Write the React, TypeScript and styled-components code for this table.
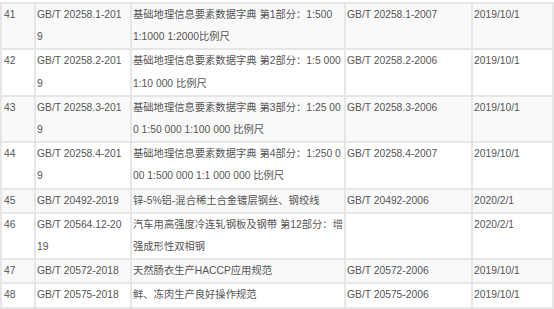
import React from "react";
import styled, { createGlobalStyle } from "styled-components";

const GlobalStyle = createGlobalStyle`
  *, *::before, *::after { box-sizing: border-box; }
  html, body { margin: 0; padding: 0; background: #ffffff; }
  body {
    font-family: "Liberation Sans", "Noto Sans CJK SC", sans-serif;
    overflow: hidden;
  }
`;

const Page = styled.div`
  padding-top: 2px;
  width: 554px;
`;

const Table = styled.table`
  width: 554px;
  table-layout: fixed;
  border-collapse: separate;
  border-spacing: 0;
  border-top: 2px solid #e6e6e6;
  border-left: 2px solid #e6e6e6;
  font-size: 10.3px;
  line-height: 22.2px;
  color: #555555;
`;

const Col = styled.col<{ $w: number }>`
  width: ${(p) => p.$w}px;
`;

const Row = styled.tr<{ $striped: boolean }>`
  background: ${(p) => (p.$striped ? "#f9f9f9" : "#ffffff")};
`;

const Cell = styled.td<{ $padLeft?: number; $padRight?: number }>`
  vertical-align: top;
  padding: 0 ${(p) => p.$padRight ?? 0}px 0 ${(p) => p.$padLeft ?? 1}px;
  border-right: 2px solid #e6e6e6;
  border-bottom: 2px solid #e6e6e6;
  word-break: break-all;
  white-space: normal;
`;

const Scale = styled.span`
  white-space: nowrap;
`;

type Item = {
  no: string;
  code: string;
  title: React.ReactNode;
  replaced: string;
  date: string;
};

const rows: Item[] = [
  {
    no: "41",
    code: "GB/T 20258.1-2019",
    title: (
      <>
        基础地理信息要素数据字典 第1部分：1:500 <Scale>1:1000</Scale> <Scale>1:2000</Scale>比例尺
      </>
    ),
    replaced: "GB/T 20258.1-2007",
    date: "2019/10/1",
  },
  {
    no: "42",
    code: "GB/T 20258.2-2019",
    title: "基础地理信息要素数据字典 第2部分：1:5 000 1:10 000 比例尺",
    replaced: "GB/T 20258.2-2006",
    date: "2019/10/1",
  },
  {
    no: "43",
    code: "GB/T 20258.3-2019",
    title: "基础地理信息要素数据字典 第3部分：1:25 000 1:50 000 1:100 000 比例尺",
    replaced: "GB/T 20258.3-2006",
    date: "2019/10/1",
  },
  {
    no: "44",
    code: "GB/T 20258.4-2019",
    title: "基础地理信息要素数据字典 第4部分：1:250 000 1:500 000 1:1 000 000 比例尺",
    replaced: "GB/T 20258.4-2007",
    date: "2019/10/1",
  },
  {
    no: "45",
    code: "GB/T 20492-2019",
    title: "锌-5%铝-混合稀土合金镀层钢丝、钢绞线",
    replaced: "GB/T 20492-2006",
    date: "2020/2/1",
  },
  {
    no: "46",
    code: "GB/T 20564.12-2019",
    title: "汽车用高强度冷连轧钢板及钢带 第12部分：增强成形性双相钢",
    replaced: "",
    date: "2020/2/1",
  },
  {
    no: "47",
    code: "GB/T 20572-2018",
    title: "天然肠衣生产HACCP应用规范",
    replaced: "GB/T 20572-2006",
    date: "2019/10/1",
  },
  {
    no: "48",
    code: "GB/T 20575-2018",
    title: "鲜、冻肉生产良好操作规范",
    replaced: "GB/T 20575-2006",
    date: "2019/10/1",
  },
];

export default function App() {
  return (
    <>
      <GlobalStyle />
      <Page>
        <Table>
          <colgroup>
            <Col $w={34} />
            <Col $w={96} />
            <Col $w={214} />
            <Col $w={127} />
            <Col $w={81} />
          </colgroup>
          <tbody>
            {rows.map((r, i) => (
              <Row key={r.no} $striped={i % 2 === 0}>
                <Cell $padLeft={2}>{r.no}</Cell>
                <Cell $padLeft={1} $padRight={4}>{r.code}</Cell>
                <Cell $padLeft={1}>{r.title}</Cell>
                <Cell $padLeft={1}>{r.replaced}</Cell>
                <Cell $padLeft={1}>{r.date}</Cell>
              </Row>
            ))}
          </tbody>
        </Table>
      </Page>
    </>
  );
}
